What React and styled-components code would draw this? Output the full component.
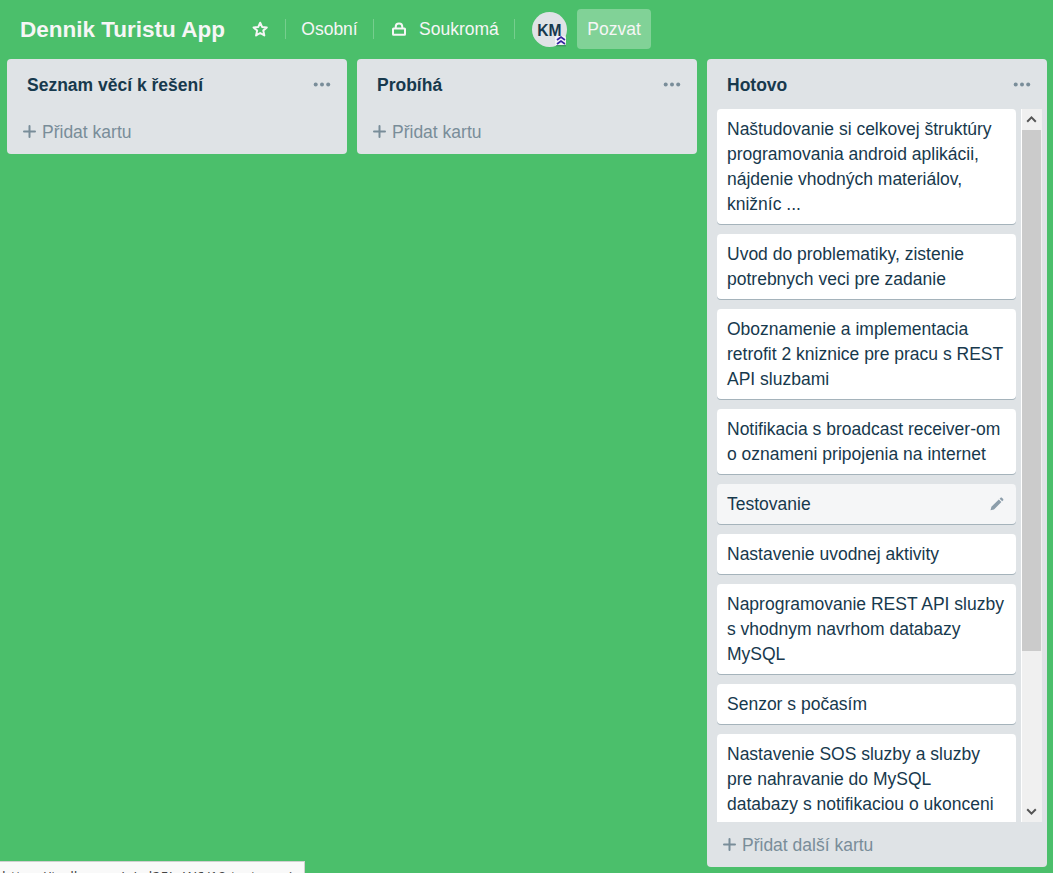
import React from "react";
import styled, { createGlobalStyle } from "styled-components";

const GlobalStyle = createGlobalStyle`
  * { box-sizing: border-box; }
  html, body { margin: 0; height: 100%; overflow: hidden; }
  body {
    background: #4bbf6b;
    color: #17394d;
    font-family: "Liberation Sans", Arial, sans-serif;
    font-size: 17.5px;
    line-height: 25px;
  }
`;

const Board = styled.div`
  position: relative;
  height: 873px;
  width: 1053px;
  overflow: hidden;
  background: #4bbf6b;
`;

const Header = styled.header`
  display: flex;
  align-items: center;
  height: 58px;
  margin-bottom: 1px;
  padding-left: 20px;
  color: #f6f6f6;
  white-space: nowrap;
`;

const BoardTitle = styled.h1`
  margin: 2px 0 0;
  width: 231px;
  font-size: 22.5px;
  line-height: 40px;
  font-weight: 700;
`;

const Divider = styled.span`
  width: 1px;
  height: 20px;
  background: rgba(255, 255, 255, 0.24);
`;

const HeaderItem = styled.div`
  display: flex;
  align-items: center;
  justify-content: ${(p) => p.$justify || "center"};
  gap: 12px;
  width: ${(p) => p.$width}px;
  height: 40px;
  padding-left: ${(p) => p.$inset || 0}px;
  svg { display: block; flex: none; }
`;

const Avatar = styled.div`
  position: relative;
  width: 35px;
  height: 35px;
  margin: 1px 0 0 17px;
  border-radius: 50%;
  background: #dfe3e6;
  color: #17394d;
  font-size: 15.6px;
  font-weight: 700;
  line-height: 37px;
  text-align: center;
`;

const AdminBadge = styled.svg`
  position: absolute;
  right: 0;
  bottom: 0;
`;

const InviteButton = styled.button`
  width: 74px;
  height: 40px;
  margin-left: 10px;
  padding: 0;
  border: 0;
  border-radius: 4px;
  background: #81d297;
  color: #f6f6f6;
  font: inherit;
`;

const Lists = styled.main`
  display: flex;
  align-items: flex-start;
  gap: 10px;
  padding-left: 7px;
`;

const ListPanel = styled.section`
  display: flex;
  flex-direction: column;
  flex: none;
  width: 340px;
  height: ${(p) => p.$height}px;
  border-radius: 4px;
  background: #dfe3e6;
`;

const ListHeader = styled.div`
  display: flex;
  align-items: center;
  justify-content: space-between;
  height: 50px;
  padding: 1px 16px 0 20px;
  flex: none;
`;

const ListTitle = styled.h2`
  margin: 1px 0 0;
  font-size: 17.5px;
  font-weight: 700;
  line-height: 25px;
`;

const ListBody = styled.div`
  display: flex;
  height: 713px;
  flex: none;
  padding: 0 5px 0 10px;
  overflow: hidden;
`;

const Cards = styled.div`
  display: flex;
  flex-direction: column;
  gap: 10px;
  width: 299px;
  margin-right: 5px;
  overflow: hidden;
`;

const Card = styled.article`
  display: flex;
  justify-content: space-between;
  flex: none;
  height: ${(p) => p.$lines * 25 + 15}px;
  padding: 8px 10px 7px;
  border-radius: 4px;
  background: ${(p) => (p.$hover ? "#f5f6f7" : "#fff")};
  box-shadow: 0 1px 0 #a5b3bb;
  white-space: pre;
  svg { margin: 5px 2px 0 0; }
`;

const Scrollbar = styled.div`
  display: flex;
  flex-direction: column;
  justify-content: space-between;
  width: 21px;
  height: 713px;
  border-left: 1px solid #fff;
  background: #f0f0f0;
`;

const ScrollArrow = styled.svg`
  display: block;
  flex: none;
`;

const Thumb = styled.div`
  width: 19px;
  height: 521px;
  background: #cbcbcb;
  margin-bottom: auto;
`;

const AddCard = styled.div`
  display: flex;
  align-items: center;
  gap: 6px;
  height: 45px;
  padding-left: 16px;
  color: #798d99;
  svg { display: block; }
  span { padding-top: 1px; }
`;

const StatusBar = styled.div`
  position: absolute;
  left: 0;
  bottom: 0;
  width: 305px;
  height: 12px;
  padding: 6px 0 0 2px;
  border: solid #d0d0d0;
  border-width: 1px 1px 0 0;
  background: #f9f9f9;
  color: #444;
  font-family: "Open Sans", sans-serif;
  font-size: 14.4px;
  line-height: 18px;
  white-space: nowrap;
  overflow: hidden;
`;

const Dots = () => (
  <svg width="18" height="6" viewBox="0 0 18 6" fill="#798d99">
    <circle cx="2.7" cy="2.5" r="2" />
    <circle cx="9" cy="2.5" r="2" />
    <circle cx="15.2" cy="2.5" r="2" />
  </svg>
);

const Plus = () => (
  <svg width="13" height="13" viewBox="0 0 13 13" fill="none" stroke="#798d99" strokeWidth="2" strokeLinecap="round">
    <path d="M6.5 1v11M1 6.5h11" />
  </svg>
);

const Star = () => (
  <svg width="18" height="18" viewBox="0 0 18 18" fill="none" stroke="#f6f6f6" strokeWidth="2" strokeLinejoin="round">
    <path d="M9.200 2.700l1.900 4.200 4.700.5-3.500 3.200 1 4.800-4.100-2.400-4.100 2.400 1-4.800-3.500-3.200 4.700-.5z" />
  </svg>
);

const Lock = () => (
  <svg width="16" height="16" viewBox="0 0 16 16" fill="none" stroke="#f6f6f6" strokeWidth="2">
    <rect x="2" y="7.4" width="12" height="6.400" rx="0.5" />
    <path d="M4.700 7.400V6c0-2.200 1.200-3.400 3.300-3.400S11.300 3.800 11.300 6v1.400" />
  </svg>
);

const Pencil = () => (
  <svg width="14" height="14" viewBox="0 0 14 14" fill="#8c9eab">
    <path d="M.5 13.300l.9-3.500 7.400-7.300 2.600 2.600L4 12.400zM9.600 1.700l.8-.8c.5-.5 1.200-.5 1.700 0l.9.900c.5.500.5 1.200 0 1.700l-.8.800z" />
  </svg>
);

function AddRow({ children }) {
  return (
    <AddCard>
      <Plus />
      <span>{children}</span>
    </AddCard>
  );
}

function List({ title, height, add, children }) {
  return (
    <ListPanel $height={height}>
      <ListHeader>
        <ListTitle>{title}</ListTitle>
        <Dots />
      </ListHeader>
      {children}
      <AddRow>{add}</AddRow>
    </ListPanel>
  );
}

const cards = [
  "Naštudovanie si celkovej štruktúry\nprogramovania android aplikácii,\nnájdenie vhodných materiálov,\nknižníc ...",
  "Uvod do problematiky, zistenie\npotrebnych veci pre zadanie",
  "Oboznamenie a implementacia\nretrofit 2 kniznice pre pracu s REST\nAPI sluzbami",
  "Notifikacia s broadcast receiver-om\no oznameni pripojenia na internet",
  "Testovanie",
  "Nastavenie uvodnej aktivity",
  "Naprogramovanie REST API sluzby\ns vhodnym navrhom databazy\nMySQL",
  "Senzor s počasím",
  "Nastavenie SOS sluzby a sluzby\npre nahravanie do MySQL\ndatabazy s notifikaciou o ukonceni\n",
];

export default function App() {
  return (
    <>
      <GlobalStyle />
      <Board>
        <Header>
          <BoardTitle>Dennik Turistu App</BoardTitle>
          <HeaderItem $width={34} $justify="flex-start"><Star /></HeaderItem>
          <Divider />
          <HeaderItem $width={87}>Osobní</HeaderItem>
          <Divider />
          <HeaderItem $width={140} $justify="flex-start" $inset={17}>
            <Lock />
            <span>Soukromá</span>
          </HeaderItem>
          <Divider />
          <Avatar>
            KM
            <AdminBadge width="12" height="12" viewBox="0 0 12 12">
              <rect x="0" y="1" width="11" height="9" rx="1.500" fill="#f4f4f8" />
              <path d="M2 5l4-3 4 3M2 9l4-3 4 3" fill="none" stroke="#3527a0" strokeWidth="1.700" />
              <path d="M1 10.800h10" stroke="#347b50" strokeWidth="0.800" />
            </AdminBadge>
          </Avatar>
          <InviteButton>Pozvat</InviteButton>
        </Header>
        <Lists>
          <List title="Seznam věcí k řešení" height={95} add="Přidat kartu" />
          <List title="Probíhá" height={95} add="Přidat kartu" />
          <List title="Hotovo" height={808} add="Přidat další kartu">
            <ListBody>
              <Cards>
                {cards.map((text, i) => (
                  <Card key={i} $lines={text.split("\n").length} $hover={text === "Testovanie"}>
                    <span>{text}</span>
                    {text === "Testovanie" && <Pencil />}
                  </Card>
                ))}
              </Cards>
              <Scrollbar>
                <ScrollArrow width="20" height="21" viewBox="0 0 20 21" fill="none" stroke="#555" strokeWidth="2">
                  <path d="M5.200 12.700l4.300-4.300 4.300 4.300" />
                </ScrollArrow>
                <Thumb />
                <ScrollArrow width="20" height="21" viewBox="0 0 20 21" fill="none" stroke="#555" strokeWidth="2">
                  <path d="M5.200 8.300l4.300 4.300 4.300-4.300" />
                </ScrollArrow>
              </Scrollbar>
            </ListBody>
          </List>
        </Lists>
        <StatusBar>https://trello.com/c/vd25LzW6/10-testovani</StatusBar>
      </Board>
    </>
  );
}
